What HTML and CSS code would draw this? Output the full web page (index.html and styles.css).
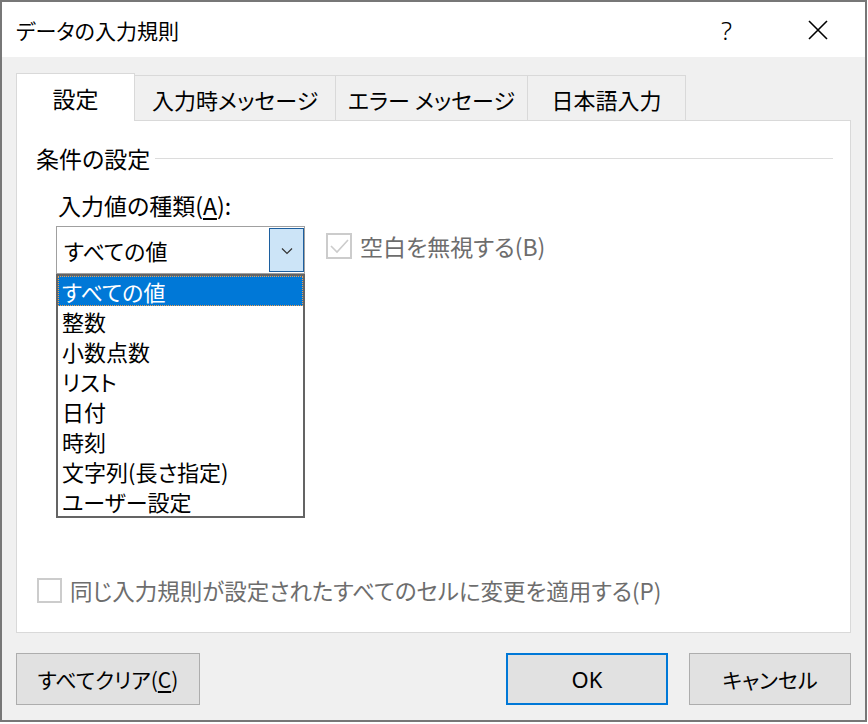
FILE: index.html
```html
<!DOCTYPE html>
<html lang="ja">
<head>
<meta charset="utf-8">
<title>データの入力規則</title>
<link rel="stylesheet" href="styles.css">
</head>
<body>
<div class="dialog">
  <div class="titlebar">
    <span class="title">データの入力規則</span>
    <span class="help">?</span>
    <span class="close">
      <svg width="20" height="20" viewBox="0 0 20 20"><path d="M1 1 L19 19 M19 1 L1 19" stroke="#000" stroke-width="1.6" fill="none"/></svg>
    </span>
  </div>
  <div class="body">
    <div class="tabs">
      <div class="tab active t1">設定</div>
      <div class="tab t2">入力時メッセージ</div>
      <div class="tab t3">エラー メッセージ</div>
      <div class="tab t4">日本語入力</div>
    </div>
    <div class="panel">
      <div class="group-head"><span class="group-label">条件の設定</span><span class="rule"></span></div>
      <div class="field-label">入力値の種類(<u>A</u>):</div>
      <div class="row">
        <div class="combo-wrap">
          <div class="combo">
            <span class="combo-text">すべての値</span>
            <span class="combo-btn">
              <svg width="12" height="8" viewBox="0 0 12 8"><path d="M1 1.5 L6 6.5 L11 1.5" stroke="#333" stroke-width="1.2" fill="none"/></svg>
            </span>
          </div>
          <ul class="listbox">
            <li class="item selected">すべての値</li>
            <li class="item">整数</li>
            <li class="item">小数点数</li>
            <li class="item">リスト</li>
            <li class="item">日付</li>
            <li class="item">時刻</li>
            <li class="item">文字列(長さ指定)</li>
            <li class="item">ユーザー設定</li>
          </ul>
        </div>
        <div class="chk chk-blank">
          <span class="box">
            <svg width="22" height="22" viewBox="0 0 22 22"><path d="M3 11 L9 17 L20 5" stroke="#cccccc" stroke-width="1.6" fill="none"/></svg>
          </span>
          <span class="chk-text">空白を無視する(B)</span>
        </div>
      </div>
      <div class="chk chk-apply">
        <span class="box small"></span>
        <span class="chk-text">同じ入力規則が設定されたすべてのセルに変更を適用する(P)</span>
      </div>
    </div>
    <div class="buttons">
      <div class="button b-clear">すべてクリア(<u>C</u>)</div>
      <div class="spacer"></div>
      <div class="button b-ok">OK</div>
      <div class="button b-cancel">キャンセル</div>
    </div>
  </div>
</div>
</body>
</html>
```

FILE: styles.css
```css
html, body {
  margin: 0;
  padding: 0;
  background: #ffffff;
}

body {
  font-family: "Noto Sans CJK JP", "Noto Sans", sans-serif;
  font-feature-settings: "palt";
  color: #000;
}

.dialog {
  width: 867px;
  height: 722px;
  box-sizing: border-box;
  border: 2px solid #777777;
  display: flex;
  flex-direction: column;
  background: #f0f0f0;
}

.titlebar {
  height: 55px;
  flex: none;
  background: #ffffff;
  display: flex;
  align-items: center;
  padding: 0 37px 0 14px;
}

.title {
  font-size: 21px;
  line-height: 24px;
  flex: 1;
}

.help {
  font-family: "Noto Sans", sans-serif;
  font-size: 26px;
  line-height: 30px;
  margin-right: 76px;
  font-weight: 300;
}

.close {
  width: 20px;
  height: 20px;
  display: block;
}

.close svg {
  display: block;
}

.body {
  flex: 1;
  display: flex;
  flex-direction: column;
  padding: 16px 14px 15px 14px;
}

.tabs {
  display: flex;
  align-items: flex-end;
  height: 48px;
  margin-bottom: -1px;
  position: relative;
  z-index: 1;
}

.tab {
  box-sizing: border-box;
  height: 45px;
  margin-bottom: 1px;
  border: 1px solid #d9d9d9;
  border-bottom: none;
  background: #f0f0f0;
  font-size: 22px;
  display: flex;
  align-items: center;
  justify-content: center;
  padding-top: 2px;
  margin-left: -1px;
}

.tab.active {
  height: 48px;
  margin-bottom: 0;
  background: #ffffff;
  margin-left: 0;
  padding-top: 0;
  font-size: 23px;
}

.t1 { width: 119px; }
.t2 { width: 202px; }
.t3 { width: 193px; }
.t4 { width: 159px; }

.panel {
  height: 513px;
  box-sizing: border-box;
  border: 1px solid #d9d9d9;
  background: #ffffff;
  display: flex;
  flex-direction: column;
  position: relative;
}

.group-head {
  display: flex;
  align-items: center;
  margin-top: 22px;
  padding: 0 17px 0 19px;
  height: 30px;
}

.group-label {
  font-size: 23px;
  line-height: 30px;
}

.rule {
  flex: 1;
  height: 1px;
  background: #dcdcdc;
  margin-left: 5px;
}

.field-label {
  font-size: 23px;
  line-height: 30px;
  margin-top: 17px;
  padding-left: 41px;
}

.field-label u {
  text-underline-offset: 3px;
}

.row {
  display: flex;
  align-items: flex-start;
  margin-top: 6px;
  padding-left: 39px;
}

.combo-wrap {
  position: relative;
  width: 249px;
}

.combo {
  box-sizing: border-box;
  height: 48px;
  border: 1px solid #a0a0a0;
  display: flex;
  align-items: stretch;
  padding: 1px 0 1px 0;
  background: #fff;
}

.combo-text {
  flex: 1;
  font-size: 22px;
  display: flex;
  align-items: center;
  padding-left: 7px;
}

.combo-btn {
  width: 35px;
  box-sizing: border-box;
  border: 1px solid #1c5e9e;
  background: #cce4f7;
  display: flex;
  align-items: center;
  justify-content: center;
  padding-top: 2px;
}

.combo-btn svg {
  display: block;
}

.listbox {
  position: absolute;
  left: 0;
  top: 48px;
  width: 249px;
  box-sizing: border-box;
  margin: 0;
  padding: 0;
  list-style: none;
  border: 2px solid #646464;
  background: #ffffff;
  z-index: 5;
}

.item {
  height: 30px;
  box-sizing: border-box;
  border: 1px dotted transparent;
  padding-left: 3px;
  font-size: 22px;
  line-height: 28px;
  white-space: nowrap;
}

.item.selected {
  background: #0078d7;
  color: #ffffff;
  border-color: #f0a050;
}

.chk {
  display: flex;
  align-items: center;
  color: #6d6d6d;
}

.chk-text {
  font-size: 22.5px;
  line-height: 30px;
}

.box {
  box-sizing: border-box;
  width: 26px;
  height: 26px;
  border: 2px solid #cccccc;
  display: flex;
  align-items: center;
  justify-content: center;
  background: #ffffff;
}

.box svg {
  display: block;
}

.chk-blank {
  margin-left: 21px;
  margin-top: 5px;
}

.chk-blank .box {
  margin-right: 8px;
}

.chk-blank .chk-text {
  font-size: 23px;
}

.chk-apply {
  margin-top: auto;
  margin-bottom: 27px;
  padding-left: 20px;
}

.box.small {
  width: 25px;
  height: 25px;
  margin-right: 8px;
}

.buttons {
  display: flex;
  margin-top: 20px;
  height: 52px;
}

.spacer {
  flex: 1;
}

.button {
  box-sizing: border-box;
  height: 52px;
  background: #e1e1e1;
  border: 1px solid #adadad;
  font-size: 21px;
  display: flex;
  align-items: center;
  justify-content: center;
}

.button u {
  text-underline-offset: 3px;
}

.b-clear {
  width: 184px;
}

.b-ok {
  width: 162px;
  border: 2px solid #0078d7;
  font-family: "Noto Sans", sans-serif;
  font-size: 22px;
}

.b-cancel {
  width: 162px;
  margin-left: 21px;
}
```
